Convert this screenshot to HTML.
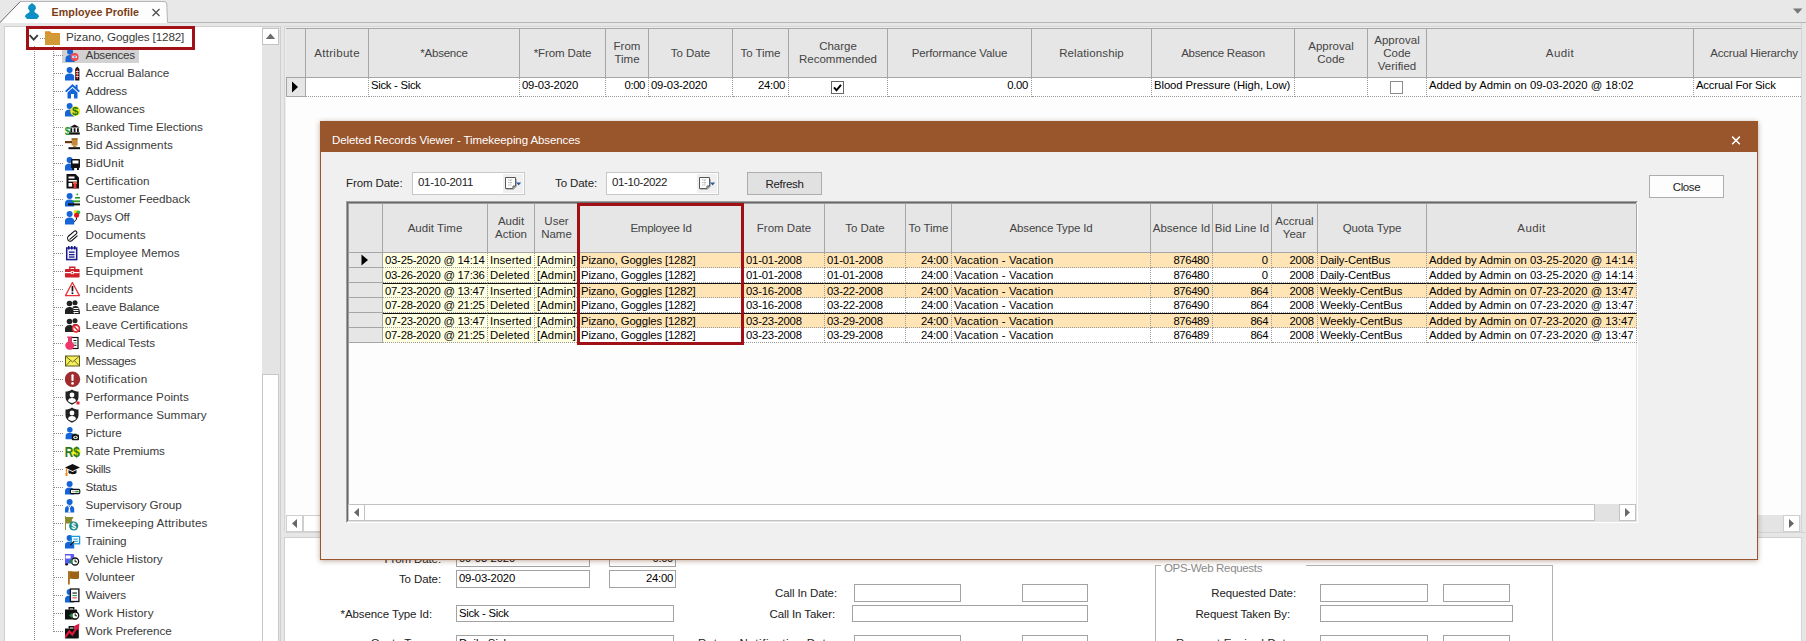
<!DOCTYPE html><html><head><meta charset="utf-8"><title>Employee Profile</title><style>
*{box-sizing:border-box;margin:0;padding:0}
html,body{width:1806px;height:641px;overflow:hidden}
body{position:relative;background:#e6e6e6;font-family:"Liberation Sans",sans-serif;font-size:11.5px;color:#3a3a3a;line-height:1}
.abs{position:absolute}
.t{position:absolute;white-space:nowrap;line-height:14px;height:14px}
.tree-item{position:absolute;left:62px;height:16px;white-space:nowrap}
.tree-item svg{position:absolute;left:3px;top:0;width:16px;height:16px}
.tree-item span{position:absolute;left:23.6px;top:1px;line-height:14px;font-size:11.7px;color:#3a3a3a}
.hd{position:absolute;background:#e6e6e6;border-right:1px solid #a6a6a6;border-bottom:1px solid #a6a6a6;display:flex;align-items:center;justify-content:center;text-align:center;color:#444;font-size:11.5px;line-height:13px;letter-spacing:0}
.cell{position:absolute;white-space:nowrap;overflow:hidden;font-size:11.3px;line-height:14px;color:#000;border-right:1px dotted #9a9a9a;border-bottom:1px dotted #9a9a9a;padding:0 3px;letter-spacing:.1px}
.r{text-align:right}
.inp{position:absolute;background:#fff;border:1px solid #a2a2a2;font-size:11.3px;line-height:14px;color:#000;padding:0 2px;white-space:nowrap;overflow:hidden}
.lbl{position:absolute;white-space:nowrap;font-size:11.5px;line-height:14px;color:#222;text-align:right;letter-spacing:-.1px}
</style></head><body>
<div class="abs" style="left:0;top:0;width:1806px;height:22px;background:#e8e8e8"></div>
<div class="abs" style="left:0;top:22px;width:1806px;height:1px;background:#b6b6b6"></div>
<div class="abs" style="left:0;top:23px;width:1806px;height:618px;background:#e6e6e6"></div>
<svg class="abs" style="left:0;top:0" width="175" height="24" viewBox="0 0 175 24"><path d="M-0.5 23 L20.3 1.5 H164 Q166.6 1.5 166.8 4 L167.5 23 Z" fill="#fdfdfd"/><path d="M20.3 1.5 H164 Q166.6 1.5 166.8 4 L167.5 22.5" fill="none" stroke="#b4b4b4" stroke-width="1"/><path d="M-0.5 23 L20.3 1.5" stroke="#6a6a6a" stroke-width="1" fill="none"/><path d="M32 3 L35.4 5.8 L36 8.4 L34.6 10.6 L34.4 12 L38 14.4 L39.2 16.3 L37 19 H27 L24.8 16.3 L26 14.4 L29.6 12 L29.4 10.6 L28 8.4 L28.6 5.8 Z" fill="#0c8fc4"/><path d="M152.5 9 L159.5 16 M159.5 9 L152.5 16" stroke="#4a4a4a" stroke-width="1.15" fill="none"/></svg>
<div class="t" style="left:51.6px;top:5px;font-weight:bold;font-size:10.7px;color:#7a3c12;letter-spacing:.05px">Employee Profile</div>
<div class="abs" style="left:4px;top:26px;width:277px;height:620px;background:#fff;border:1px solid #cfcfcf"></div>
<div class="abs" style="left:262px;top:27px;width:18px;height:614px;background:#e4e4e4"></div>
<div class="abs" style="left:262px;top:28px;width:17px;height:17px;background:#fff;border:1px solid #c2c2c2"></div>
<svg class="abs" style="left:262px;top:28px" width="17" height="17"><path d="M3.8 11 L8.5 5.6 L13.2 11 Z" fill="#6d6d6d"/></svg>
<div class="abs" style="left:262px;top:374px;width:17px;height:270px;background:#fff;border:1px solid #c8c8c8"></div>
<div class="abs" style="left:34px;top:46px;width:0;height:600px;border-left:1px dotted #8a8a8a"></div>
<div class="abs" style="left:53px;top:46px;width:0;height:586px;border-left:1px dotted #8a8a8a"></div>
<svg class="abs" style="left:28px;top:32px" width="12" height="12"><path d="M1.6 3.2 L5.7 7.6 L9.8 3.2" stroke="#3a3a3a" stroke-width="1.9" fill="none"/></svg>
<div class="abs" style="left:40px;top:38px;width:5px;height:0;border-top:1px dotted #8a8a8a"></div>
<svg class="abs" style="left:45px;top:30px" width="16" height="16"><path d="M0 1.2 H5 L6.4 3 H15 V15 H0 Z" fill="#e48a26"/><rect x="0" y="3.6" width="15" height="11.4" fill="#d29a36"/></svg>
<div class="t" style="left:66px;top:30px;font-size:11.7px;color:#3a3a3a;letter-spacing:-.15px">Pizano, Goggles [1282]</div>
<div class="abs" style="left:62px;top:47px;width:77px;height:16px;background:#d2d2d2"></div>
<div class="abs" style="left:54px;top:55px;width:9px;height:0;border-top:1px dotted #8a8a8a"></div>
<div class="tree-item" style="top:47px"><svg viewBox="0 0 16 16"><g transform="translate(0.5,-0.3) scale(1.0)" fill="#1565d8"><circle cx="4.6" cy="5.1" r="3"/><path d="M0 15.4 V12 C0 9.6 1.8 8.4 4.6 8.4 C7.4 8.4 9.2 9.6 9.2 12 V15.4 Z"/></g><circle cx="9.6" cy="9.9" r="4" fill="#f0454f"/><rect x="7.4" y="8.7" width="4.4" height="2.4" fill="#fff"/><rect x="8.6" y="9.3" width="2.2" height="1.2" fill="#1565d8"/></svg><span style="letter-spacing:-0.26px">Absences</span></div>
<div class="abs" style="left:54px;top:73px;width:9px;height:0;border-top:1px dotted #8a8a8a"></div>
<div class="tree-item" style="top:65px"><svg viewBox="0 0 16 16"><g transform="translate(0,0) scale(1.0)" fill="#1565d8"><circle cx="4.6" cy="5.1" r="3"/><path d="M0 15.4 V12 C0 9.6 1.8 8.4 4.6 8.4 C7.4 8.4 9.2 9.6 9.2 12 V15.4 Z"/></g><path d="M10.2 15.4 V4 L12.2 1.5 L14.4 4 V15.4 Z" fill="#111"/><rect x="11.6" y="4.5" width="1.4" height="9.5" fill="#e33"/><rect x="10.8" y="6" width="3" height="0.8" fill="#fff"/><rect x="10.8" y="8.5" width="3" height="0.8" fill="#fff"/><rect x="10.8" y="11" width="3" height="0.8" fill="#fff"/></svg><span style="letter-spacing:-0.06px">Accrual Balance</span></div>
<div class="abs" style="left:54px;top:91px;width:9px;height:0;border-top:1px dotted #8a8a8a"></div>
<div class="tree-item" style="top:83px"><svg viewBox="0 0 16 16"><path d="M7.5 1 L0 8 L1.4 9.3 L7.5 3.8 L13.6 9.3 L15 8 L12.6 5.7 V1.8 H10.6 V3.8 Z" fill="#1565d8"/><path d="M2.5 9.5 L7.5 5 L12.5 9.5 V15.4 H9 V11 H6 V15.4 H2.5 Z" fill="#1565d8"/></svg><span style="letter-spacing:-0.25px">Address</span></div>
<div class="abs" style="left:54px;top:109px;width:9px;height:0;border-top:1px dotted #8a8a8a"></div>
<div class="tree-item" style="top:101px"><svg viewBox="0 0 16 16"><g transform="translate(0,0) scale(1.0)" fill="#1565d8"><circle cx="4.6" cy="5.1" r="3"/><path d="M0 15.4 V12 C0 9.6 1.8 8.4 4.6 8.4 C7.4 8.4 9.2 9.6 9.2 12 V15.4 Z"/></g><circle cx="10.2" cy="10.2" r="4.9" fill="#f3e91a"/><text x="10.2" y="14.4" font-size="11.5" font-weight="bold" text-anchor="middle" fill="#1a7a1a" font-family='&quot;Liberation Sans&quot;, sans-serif'>$</text></svg><span style="letter-spacing:0.01px">Allowances</span></div>
<div class="abs" style="left:54px;top:127px;width:9px;height:0;border-top:1px dotted #8a8a8a"></div>
<div class="tree-item" style="top:119px"><svg viewBox="0 0 16 16"><text x="2.4" y="15.6" font-size="10" font-weight="bold" text-anchor="middle" fill="#1a9a1a" font-family='&quot;Liberation Sans&quot;, sans-serif'>$</text><path d="M9.6 5.6 L14.8 8.6 H4.4 Z" fill="#111"/><rect x="5.4" y="9.2" width="1.8" height="4" fill="#111"/><rect x="8.7" y="9.2" width="1.8" height="4" fill="#111"/><rect x="12" y="9.2" width="1.8" height="4" fill="#111"/><rect x="4.4" y="13.4" width="10.4" height="2.2" fill="#111"/></svg><span style="letter-spacing:-0.08px">Banked Time Elections</span></div>
<div class="abs" style="left:54px;top:145px;width:9px;height:0;border-top:1px dotted #8a8a8a"></div>
<div class="tree-item" style="top:137px"><svg viewBox="0 0 16 16"><rect x="6.6" y="1.4" width="6" height="7" fill="#c58a3a"/><rect x="6.6" y="1.4" width="6" height="1.2" fill="#8b5a1a"/><rect x="-1" y="4" width="8" height="2.2" fill="#6a3a0e"/><rect x="8" y="8.4" width="3.4" height="1.8" fill="#c58a3a"/><rect x="3.5" y="10.2" width="11.5" height="2" fill="#111"/></svg><span style="letter-spacing:0.06px">Bid Assignments</span></div>
<div class="abs" style="left:54px;top:163px;width:9px;height:0;border-top:1px dotted #8a8a8a"></div>
<div class="tree-item" style="top:155px"><svg viewBox="0 0 16 16"><g transform="translate(0,0) scale(1.0)" fill="#1565d8"><circle cx="4.6" cy="5.1" r="3"/><path d="M0 15.4 V12 C0 9.6 1.8 8.4 4.6 8.4 C7.4 8.4 9.2 9.6 9.2 12 V15.4 Z"/></g><g transform="translate(-1,0)"><rect x="7" y="4" width="9" height="9" rx="1" fill="#111"/><rect x="8.5" y="5.5" width="6" height="3" fill="#fff"/><rect x="8" y="13" width="2" height="2" fill="#111"/><rect x="13" y="13" width="2" height="2" fill="#111"/></g></svg><span style="letter-spacing:0.10px">BidUnit</span></div>
<div class="abs" style="left:54px;top:181px;width:9px;height:0;border-top:1px dotted #8a8a8a"></div>
<div class="tree-item" style="top:173px"><svg viewBox="0 0 16 16"><path d="M1.5 1 H10.5 L14 4.5 V15.4 H1.5 Z" fill="#111"/><rect x="3.5" y="3.5" width="6" height="2" fill="#fff"/><rect x="3.5" y="7" width="8.4" height="1.6" fill="#fff"/><rect x="3.5" y="10" width="3.6" height="3.6" fill="#fff"/><rect x="8" y="9" width="4" height="2" fill="#f05a3a"/><rect x="8.6" y="11" width="2.8" height="4.4" fill="#e33"/></svg><span style="letter-spacing:0.19px">Certification</span></div>
<div class="abs" style="left:54px;top:199px;width:9px;height:0;border-top:1px dotted #8a8a8a"></div>
<div class="tree-item" style="top:191px"><svg viewBox="0 0 16 16"><g transform="translate(0,0) scale(1.0)" fill="#1565d8"><circle cx="4.6" cy="5.1" r="3"/><path d="M0 15.4 V12 C0 9.6 1.8 8.4 4.6 8.4 C7.4 8.4 9.2 9.6 9.2 12 V15.4 Z"/></g><rect x="11.5" y="2.6" width="1.6" height="1.6" fill="#2a9a2a"/><rect x="10" y="6" width="5" height="1.6" fill="#2a9a2a"/><rect x="7" y="9.4" width="8" height="1.8" fill="#2a9a2a"/><rect x="3" y="12.4" width="12" height="2" fill="#111"/></svg><span style="letter-spacing:-0.05px">Customer Feedback</span></div>
<div class="abs" style="left:54px;top:217px;width:9px;height:0;border-top:1px dotted #8a8a8a"></div>
<div class="tree-item" style="top:209px"><svg viewBox="0 0 16 16"><g transform="translate(0,0) scale(1.0)" fill="#1565d8"><circle cx="4.6" cy="5.1" r="3"/><path d="M0 15.4 V12 C0 9.6 1.8 8.4 4.6 8.4 C7.4 8.4 9.2 9.6 9.2 12 V15.4 Z"/></g><circle cx="11" cy="3.4" r="2.4" fill="#f3e21a"/><circle cx="13.3" cy="3.6" r="2" fill="#2aba4a"/><circle cx="11.6" cy="6.2" r="2.5" fill="#e8151f"/><path d="M11.6 8.6 C11.6 11 10.5 12 9 12.6" stroke="#111" stroke-width="1" fill="none"/></svg><span style="letter-spacing:-0.16px">Days Off</span></div>
<div class="abs" style="left:54px;top:235px;width:9px;height:0;border-top:1px dotted #8a8a8a"></div>
<div class="tree-item" style="top:227px"><svg viewBox="0 0 16 16"><path d="M4 12.2 L10.8 6.4 A1.7 1.7 0 0 0 8.6 3.8 L2.6 9 A2.8 2.8 0 0 0 6.2 13.2 L12 8.2" transform="translate(0.5,0.5)" stroke="#111" stroke-width="1.1" fill="none"/></svg><span style="letter-spacing:0.11px">Documents</span></div>
<div class="abs" style="left:54px;top:253px;width:9px;height:0;border-top:1px dotted #8a8a8a"></div>
<div class="tree-item" style="top:245px"><svg viewBox="0 0 16 16"><rect x="1.7" y="3" width="10" height="11.6" fill="#eef" stroke="#1a1a8a" stroke-width="1.5"/><rect x="3" y="1" width="1.5" height="3.5" fill="#1a1a8a"/><rect x="6" y="1" width="1.5" height="3.5" fill="#1a1a8a"/><rect x="9" y="1" width="1.5" height="3.5" fill="#1a1a8a"/><rect x="4" y="6.5" width="5.5" height="1.3" fill="#1a1a8a"/><rect x="4" y="9" width="5.5" height="1.3" fill="#1a1a8a"/><rect x="4" y="11.4" width="5.5" height="1.3" fill="#1a1a8a"/></svg><span style="letter-spacing:0.04px">Employee Memos</span></div>
<div class="abs" style="left:54px;top:271px;width:9px;height:0;border-top:1px dotted #8a8a8a"></div>
<div class="tree-item" style="top:263px"><svg viewBox="0 0 16 16"><path d="M4.8 6 V4.2 H9.8 V6" stroke="#d0202a" stroke-width="1.4" fill="none"/><rect x="0" y="6" width="14.6" height="8.6" rx="0.8" fill="#d0202a"/><rect x="0" y="9" width="14.6" height="1.2" fill="#fff"/><rect x="5.8" y="8" width="3" height="3.2" fill="#fff"/><rect x="6.6" y="8.8" width="1.4" height="1.6" fill="#d0202a"/></svg><span style="letter-spacing:0.16px">Equipment</span></div>
<div class="abs" style="left:54px;top:289px;width:9px;height:0;border-top:1px dotted #8a8a8a"></div>
<div class="tree-item" style="top:281px"><svg viewBox="0 0 16 16"><path d="M7.4 1.5 L14.4 14.6 H0.4 Z" fill="#fff" stroke="#e8303a" stroke-width="1.3" stroke-linejoin="round"/><rect x="6.6" y="5" width="1.7" height="5.4" fill="#111"/><rect x="6.6" y="11.4" width="1.7" height="1.7" fill="#111"/></svg><span style="letter-spacing:0.06px">Incidents</span></div>
<div class="abs" style="left:54px;top:307px;width:9px;height:0;border-top:1px dotted #8a8a8a"></div>
<div class="tree-item" style="top:299px"><svg viewBox="0 0 16 16"><g transform="translate(-1,0)"><g fill="#222"><circle cx="5.5" cy="4.5" r="2.8"/><path d="M0 15 C0.5 11 2 8 5.5 8 C9 8 10 10 10.5 15 Z"/><circle cx="11" cy="3.8" r="2.5"/><path d="M8.5 8 C10 6.6 13 6.6 14.2 8 C15.5 9.5 16 12 16 15 H11 Z"/></g><g fill="#fff"><rect x="9.5" y="9" width="5" height="1"/><rect x="9.5" y="11" width="5" height="1"/><rect x="9.5" y="13" width="5" height="1"/></g></g></svg><span style="letter-spacing:-0.29px">Leave Balance</span></div>
<div class="abs" style="left:54px;top:325px;width:9px;height:0;border-top:1px dotted #8a8a8a"></div>
<div class="tree-item" style="top:317px"><svg viewBox="0 0 16 16"><g transform="translate(-1,0)"><g fill="#222"><circle cx="5.5" cy="4.5" r="2.8"/><path d="M0 15 C0.5 11 2 8 5.5 8 C9 8 10 10 10.5 15 Z"/><circle cx="11" cy="3.8" r="2.5"/><path d="M8.5 8 C10 6.6 13 6.6 14.2 8 C15.5 9.5 16 12 16 15 H11 Z"/></g><circle cx="12" cy="11.5" r="3.4" fill="#fff" stroke="#e8252f" stroke-width="1.6"/><path d="M9.8 9.3 L14.2 13.7" stroke="#e8252f" stroke-width="1.5"/></g></svg><span style="letter-spacing:-0.02px">Leave Certifications</span></div>
<div class="abs" style="left:54px;top:343px;width:9px;height:0;border-top:1px dotted #8a8a8a"></div>
<div class="tree-item" style="top:335px"><svg viewBox="0 0 16 16"><rect x="6" y="2.5" width="7" height="11" fill="#fff" stroke="#111" stroke-width="1.2"/><rect x="8.5" y="5" width="3" height="1" fill="#111"/><rect x="8.5" y="7.4" width="3" height="1" fill="#2a9a5a"/><rect x="8.5" y="9.8" width="3" height="1" fill="#111"/><path d="M2 1.4 H7.4 V2.8 H6.4 V6.4 A4.4 4.4 0 1 1 3 6.4 V2.8 H2 Z" fill="#f0356a"/></svg><span style="letter-spacing:-0.10px">Medical Tests</span></div>
<div class="abs" style="left:54px;top:361px;width:9px;height:0;border-top:1px dotted #8a8a8a"></div>
<div class="tree-item" style="top:353px"><svg viewBox="0 0 16 16"><rect x="0.5" y="3" width="14" height="10" fill="#f5ef5a" stroke="#5a5a1a" stroke-width="1"/><path d="M0.7 3.3 L7.5 9 L14.3 3.3 M0.7 12.8 L5.8 7.4 M14.3 12.8 L9.2 7.4" stroke="#5a5a1a" stroke-width="0.9" fill="none"/></svg><span style="letter-spacing:-0.39px">Messages</span></div>
<div class="abs" style="left:54px;top:379px;width:9px;height:0;border-top:1px dotted #8a8a8a"></div>
<div class="tree-item" style="top:371px"><svg viewBox="0 0 16 16"><circle cx="7.5" cy="8.3" r="7.7" fill="#a02c30"/><rect x="6.4" y="3.2" width="2.2" height="6.8" rx="1" fill="#fff"/><circle cx="7.5" cy="12.4" r="1.3" fill="#fff"/></svg><span style="letter-spacing:0.35px">Notification</span></div>
<div class="abs" style="left:54px;top:397px;width:9px;height:0;border-top:1px dotted #8a8a8a"></div>
<div class="tree-item" style="top:389px"><svg viewBox="0 0 16 16"><g transform="translate(-1,0)"><path d="M8 0.5 C10 2 12.5 2.6 14.5 2.6 V8 C14.5 11.5 12 14 8 15.7 C4 14 1.5 11.5 1.5 8 V2.6 C3.5 2.6 6 2 8 0.5 Z" fill="#222"/><circle cx="8" cy="6" r="2.4" fill="#fff"/><path d="M4 12 C4.2 10 5.5 9 8 9 C10.5 9 11.8 10 12 12 C11 13 9.5 13.6 8 14 C6.5 13.6 5 13 4 12 Z" fill="#fff"/><rect x="12.5" y="12.5" width="3" height="3" fill="#e8252f"/></g></svg><span style="letter-spacing:0.03px">Performance Points</span></div>
<div class="abs" style="left:54px;top:415px;width:9px;height:0;border-top:1px dotted #8a8a8a"></div>
<div class="tree-item" style="top:407px"><svg viewBox="0 0 16 16"><g transform="translate(-1,0)"><path d="M8 0.5 C10 2 12.5 2.6 14.5 2.6 V8 C14.5 11.5 12 14 8 15.7 C4 14 1.5 11.5 1.5 8 V2.6 C3.5 2.6 6 2 8 0.5 Z" fill="#222"/><circle cx="8" cy="6" r="2.4" fill="#fff"/><path d="M4 12 C4.2 10 5.5 9 8 9 C10.5 9 11.8 10 12 12 C11 13 9.5 13.6 8 14 C6.5 13.6 5 13 4 12 Z" fill="#fff"/></g></svg><span style="letter-spacing:0.04px">Performance Summary</span></div>
<div class="abs" style="left:54px;top:433px;width:9px;height:0;border-top:1px dotted #8a8a8a"></div>
<div class="tree-item" style="top:425px"><svg viewBox="0 0 16 16"><g transform="translate(0.6,0) scale(0.92)" fill="#1565d8"><circle cx="4.6" cy="5.1" r="3"/><path d="M0 15.4 V12 C0 9.6 1.8 8.4 4.6 8.4 C7.4 8.4 9.2 9.6 9.2 12 V15.4 Z"/></g><rect x="6.8" y="9.6" width="7.2" height="5.6" rx="1" fill="#111"/><rect x="8.6" y="8.7" width="3" height="1.4" fill="#111"/><ellipse cx="10.5" cy="12.4" rx="2.2" ry="1.6" fill="#fff"/><ellipse cx="10.5" cy="12.4" rx="1.1" ry="0.8" fill="#111"/></svg><span style="letter-spacing:-0.03px">Picture</span></div>
<div class="abs" style="left:54px;top:451px;width:9px;height:0;border-top:1px dotted #8a8a8a"></div>
<div class="tree-item" style="top:443px"><svg viewBox="0 0 16 16"><circle cx="11" cy="9" r="4.6" fill="#f3f01a"/><text x="7.3" y="14" font-size="14" font-weight="bold" text-anchor="middle" fill="#2a7a1a" font-family='&quot;Liberation Sans&quot;, sans-serif' textLength="15" lengthAdjust="spacingAndGlyphs">R$</text></svg><span style="letter-spacing:-0.10px">Rate Premiums</span></div>
<div class="abs" style="left:54px;top:469px;width:9px;height:0;border-top:1px dotted #8a8a8a"></div>
<div class="tree-item" style="top:461px"><svg viewBox="0 0 16 16"><g transform="translate(-1,0)"><path d="M8.5 3 L16 6.5 L8.5 10 L1 6.5 Z" fill="#111"/><path d="M4.5 9 V12 C6 13.6 11 13.6 12.5 12 V9 L8.5 11 Z" fill="#111"/><path d="M2.5 7 V13" stroke="#f08a1a" stroke-width="1.3"/><rect x="1.5" y="12" width="2" height="3" fill="#f08a1a"/></g></svg><span style="letter-spacing:-0.38px">Skills</span></div>
<div class="abs" style="left:54px;top:487px;width:9px;height:0;border-top:1px dotted #8a8a8a"></div>
<div class="tree-item" style="top:479px"><svg viewBox="0 0 16 16"><g transform="translate(0,0) scale(1.0)" fill="#1565d8"><circle cx="4.6" cy="5.1" r="3"/><path d="M0 15.4 V12 C0 9.6 1.8 8.4 4.6 8.4 C7.4 8.4 9.2 9.6 9.2 12 V15.4 Z"/></g><rect x="5.4" y="10.4" width="9.4" height="4.2" rx="1" fill="#fff" stroke="#111" stroke-width="1.1"/><rect x="7" y="11.8" width="4" height="1.5" fill="#bbb"/><rect x="10.6" y="11.8" width="3" height="1.5" fill="#2a9a2a"/></svg><span style="letter-spacing:-0.33px">Status</span></div>
<div class="abs" style="left:54px;top:505px;width:9px;height:0;border-top:1px dotted #8a8a8a"></div>
<div class="tree-item" style="top:497px"><svg viewBox="0 0 16 16"><g transform="translate(0,0) scale(1.0)" fill="#1565d8"><circle cx="4.6" cy="5.1" r="3"/><path d="M0 15.4 V12 C0 9.6 1.8 8.4 4.6 8.4 C7.4 8.4 9.2 9.6 9.2 12 V15.4 Z"/></g><path d="M4.4 8.4 L5.6 15.4 H3.2 Z" fill="#fff"/><path d="M2.6 8.6 L4.4 11 L6.2 8.6" stroke="#fff" stroke-width="0.9" fill="none"/></svg><span style="letter-spacing:-0.08px">Supervisory Group</span></div>
<div class="abs" style="left:54px;top:523px;width:9px;height:0;border-top:1px dotted #8a8a8a"></div>
<div class="tree-item" style="top:515px"><svg viewBox="0 0 16 16"><g transform="translate(-2.3,0)"><rect x="1.5" y="1" width="1.6" height="14" fill="#7a7a1a"/><path d="M3 2 H11 L9 5 L11 8.5 H3 Z" fill="#8a8a2a"/><circle cx="11" cy="11" r="4.6" fill="#1a8a8a"/><text x="11" y="14.2" font-size="8.5" font-weight="bold" text-anchor="middle" fill="#fff" font-family='"Liberation Sans", sans-serif'>$</text></g></svg><span style="letter-spacing:0.16px">Timekeeping Attributes</span></div>
<div class="abs" style="left:54px;top:541px;width:9px;height:0;border-top:1px dotted #8a8a8a"></div>
<div class="tree-item" style="top:533px"><svg viewBox="0 0 16 16"><g transform="translate(0,0) scale(1.0)" fill="#1565d8"><circle cx="4.6" cy="5.1" r="3"/><path d="M0 15.4 V12 C0 9.6 1.8 8.4 4.6 8.4 C7.4 8.4 9.2 9.6 9.2 12 V15.4 Z"/></g><rect x="6.4" y="3.4" width="8.2" height="7.4" fill="#fff" stroke="#1a9ad8" stroke-width="1.3"/><rect x="8.4" y="5.6" width="4.4" height="1" fill="#1a9ad8"/><rect x="8.4" y="7.8" width="4.4" height="1" fill="#1a9ad8"/><path d="M5.4 12 L9 8.6" stroke="#111" stroke-width="1.4"/></svg><span style="letter-spacing:-0.12px">Training</span></div>
<div class="abs" style="left:54px;top:559px;width:9px;height:0;border-top:1px dotted #8a8a8a"></div>
<div class="tree-item" style="top:551px"><svg viewBox="0 0 16 16"><g transform="translate(-1.4,0)"><rect x="0.5" y="3" width="10" height="8.5" rx="1" fill="#5a5af0"/><rect x="2" y="4.5" width="5" height="3" fill="#fff"/><circle cx="3" cy="13" r="1.6" fill="#111"/><rect x="0.5" y="11" width="8" height="1.5" fill="#5a5af0"/><circle cx="11.5" cy="10.5" r="3.5" fill="#fff" stroke="#111" stroke-width="1.3"/><path d="M11.5 8.5 V10.8 H13.3" stroke="#111" stroke-width="1" fill="none"/><path d="M5.2 10.5 L8.7 7.7 V13.3 Z" fill="#1a8a3a"/></g></svg><span style="letter-spacing:-0.02px">Vehicle History</span></div>
<div class="abs" style="left:54px;top:577px;width:9px;height:0;border-top:1px dotted #8a8a8a"></div>
<div class="tree-item" style="top:569px"><svg viewBox="0 0 16 16"><g transform="translate(-1,0)"><rect x="4" y="2" width="1.8" height="13.5" fill="#a8701a"/><path d="M5.5 2.5 C8 1.5 11 3.5 15 2 V9.5 C11 11 8 9 5.5 10 Z" fill="#9a6414"/></g></svg><span style="letter-spacing:-0.02px">Volunteer</span></div>
<div class="abs" style="left:54px;top:595px;width:9px;height:0;border-top:1px dotted #8a8a8a"></div>
<div class="tree-item" style="top:587px"><svg viewBox="0 0 16 16"><g transform="translate(0,0) scale(1.0)" fill="#1565d8"><circle cx="4.6" cy="5.1" r="3"/><path d="M0 15.4 V12 C0 9.6 1.8 8.4 4.6 8.4 C7.4 8.4 9.2 9.6 9.2 12 V15.4 Z"/></g><g transform="translate(-1.1,0)"><rect x="6.5" y="2" width="8.5" height="12.5" fill="#fff" stroke="#111" stroke-width="1.3"/><rect x="8.5" y="5.5" width="4.5" height="1.1" fill="#111"/><rect x="8.5" y="8" width="4.5" height="1.1" fill="#2a9a5a"/><rect x="8.5" y="10.3" width="4.5" height="1.1" fill="#e8454f"/></g></svg><span style="letter-spacing:-0.23px">Waivers</span></div>
<div class="abs" style="left:54px;top:613px;width:9px;height:0;border-top:1px dotted #8a8a8a"></div>
<div class="tree-item" style="top:605px"><svg viewBox="0 0 16 16"><g transform="translate(-1.3,0)"><path d="M5.5 4.5 V2.8 H10 V4.5" stroke="#111" stroke-width="1.4" fill="none"/><rect x="0.5" y="4.5" width="13" height="10" rx="1.3" fill="#111"/><circle cx="11.5" cy="10.5" r="3.5" fill="#fff" stroke="#111" stroke-width="1.3"/><path d="M11.5 8.5 V10.8 H13.3" stroke="#111" stroke-width="1" fill="none"/><path d="M5.2 10.5 L8.7 7.7 V13.3 Z" fill="#1a8a3a"/></g></svg><span style="letter-spacing:0.11px">Work History</span></div>
<div class="abs" style="left:54px;top:631px;width:9px;height:0;border-top:1px dotted #8a8a8a"></div>
<div class="tree-item" style="top:623px"><svg viewBox="0 0 16 16"><g transform="translate(-1.2,0)"><path d="M5.5 5.5 V3.8 H10 V5.5" stroke="#111" stroke-width="1.4" fill="none"/><rect x="0.5" y="5.5" width="14.5" height="10" rx="1.3" fill="#111"/><path d="M1 14.5 L5.5 8.5 L8.5 11.5 L12.5 5.5" stroke="#e0143c" stroke-width="2.2" fill="none"/><path d="M9.5 3.5 L15.5 0.5 L15 7.5 Z" fill="#e0143c"/></g></svg><span style="letter-spacing:-0.10px">Work Preference</span></div>
<div class="abs" style="left:26px;top:26px;width:169px;height:24px;border:3px solid #a10f17"></div>
<div class="abs" style="left:284px;top:26px;width:1522px;height:506px;background:#fdfdfd;border-left:1px solid #d6d6d6;border-top:1px solid #d6d6d6;box-shadow:inset 1px 1px 0 #ececec"></div>
<div class="abs" style="left:286px;top:28px;width:1520px;height:1px;background:#a6a6a6"></div>
<div class="abs" style="left:286px;top:77px;width:1px;height:20px;background:#a6a6a6"></div>
<div class="hd" style="left:286px;top:29px;width:20px;height:49px;"></div>
<div class="hd" style="left:306px;top:29px;width:63px;height:49px;letter-spacing:0.32px;">Attribute</div>
<div class="hd" style="left:369px;top:29px;width:151px;height:49px;letter-spacing:-0.22px;">*Absence</div>
<div class="hd" style="left:520px;top:29px;width:86px;height:49px;letter-spacing:-0.11px;">*From Date</div>
<div class="hd" style="left:606px;top:29px;width:43px;height:49px;">From<br>Time</div>
<div class="hd" style="left:649px;top:29px;width:84px;height:49px;letter-spacing:-0.02px;">To Date</div>
<div class="hd" style="left:733px;top:29px;width:56px;height:49px;letter-spacing:-0.05px;">To Time</div>
<div class="hd" style="left:789px;top:29px;width:99px;height:49px;">Charge<br>Recommended</div>
<div class="hd" style="left:888px;top:29px;width:144px;height:49px;letter-spacing:-0.11px;">Performance Value</div>
<div class="hd" style="left:1032px;top:29px;width:120px;height:49px;letter-spacing:0.12px;">Relationship</div>
<div class="hd" style="left:1152px;top:29px;width:143px;height:49px;letter-spacing:-0.28px;">Absence Reason</div>
<div class="hd" style="left:1295px;top:29px;width:73px;height:49px;">Approval<br>Code</div>
<div class="hd" style="left:1368px;top:29px;width:59px;height:49px;">Approval<br>Code<br>Verified</div>
<div class="hd" style="left:1427px;top:29px;width:267px;height:49px;letter-spacing:0.42px;">Audit</div>
<div class="hd" style="left:1694px;top:29px;width:121px;height:49px;letter-spacing:-0.18px;">Accrual Hierarchy</div>
<div class="abs" style="left:286px;top:78px;width:20px;height:19px;background:#e6e6e6;border-right:1px solid #a6a6a6;border-bottom:1px solid #a6a6a6;border-left:1px solid #a6a6a6"></div>
<svg class="abs" style="left:286px;top:78px" width="19" height="19"><path d="M6 3.5 L12 9 L6 14.5 Z" fill="#000"/></svg>
<div class="cell" style="left:306px;top:78px;width:63px;height:19px;background:#fff;padding:0 3px 0 2px;"></div>
<div class="cell" style="left:369px;top:78px;width:151px;height:19px;background:#fff;padding:0 3px 0 2px;letter-spacing:-0.28px;">Sick - Sick</div>
<div class="cell" style="left:520px;top:78px;width:86px;height:19px;background:#fff;padding:0 3px 0 2px;letter-spacing:-0.18px;">09-03-2020</div>
<div class="cell r" style="left:606px;top:78px;width:43px;height:19px;background:#fff;padding:0 3px 0 2px;letter-spacing:-0.40px;">0:00</div>
<div class="cell" style="left:649px;top:78px;width:84px;height:19px;background:#fff;padding:0 3px 0 2px;letter-spacing:-0.18px;">09-03-2020</div>
<div class="cell r" style="left:733px;top:78px;width:56px;height:19px;background:#fff;padding:0 3px 0 2px;letter-spacing:-0.23px;">24:00</div>
<div class="cell" style="left:789px;top:78px;width:99px;height:19px;background:#fff;padding:0 3px 0 2px;"></div>
<div class="cell r" style="left:888px;top:78px;width:144px;height:19px;background:#fff;padding:0 3px 0 2px;letter-spacing:-0.30px;">0.00</div>
<div class="cell" style="left:1032px;top:78px;width:120px;height:19px;background:#fff;padding:0 3px 0 2px;"></div>
<div class="cell" style="left:1152px;top:78px;width:143px;height:19px;background:#fff;padding:0 3px 0 2px;letter-spacing:-0.07px;">Blood Pressure (High, Low)</div>
<div class="cell" style="left:1295px;top:78px;width:73px;height:19px;background:#fff;padding:0 3px 0 2px;"></div>
<div class="cell" style="left:1368px;top:78px;width:59px;height:19px;background:#fff;padding:0 3px 0 2px;"></div>
<div class="cell" style="left:1427px;top:78px;width:267px;height:19px;background:#fff;padding:0 3px 0 2px;letter-spacing:-0.01px;">Added by Admin on 09-03-2020 @ 18:02</div>
<div class="cell" style="left:1694px;top:78px;width:121px;height:19px;background:#fff;padding:0 3px 0 2px;letter-spacing:-0.16px;">Accrual For Sick</div>
<div class="abs" style="left:831px;top:81px;width:13px;height:13px;background:#fff;border:1px solid #666"></div>
<svg class="abs" style="left:831px;top:81px" width="13" height="13"><path d="M3 6.3 L5.5 9.3 L10 3.8" stroke="#000" stroke-width="2" fill="none"/></svg>
<div class="abs" style="left:1390px;top:81px;width:13px;height:13px;background:#fff;border:1px solid #8c8c8c"></div>
<div class="abs" style="left:286px;top:515px;width:1520px;height:17px;background:#e4e4e4"></div>
<div class="abs" style="left:286px;top:515px;width:17px;height:17px;background:#fff;border:1px solid #cfcfcf"></div>
<svg class="abs" style="left:286px;top:515px" width="17" height="17"><path d="M11 4 L6 8.5 L11 13 Z" fill="#666"/></svg>
<div class="abs" style="left:303px;top:515px;width:1400px;height:17px;background:#fff;border:1px solid #cfcfcf"></div>
<div class="abs" style="left:1783px;top:515px;width:17px;height:17px;background:#fff;border:1px solid #cfcfcf"></div>
<svg class="abs" style="left:1783px;top:515px" width="17" height="17"><path d="M6 4 L11 8.5 L6 13 Z" fill="#666"/></svg>
<div class="abs" style="left:284px;top:537px;width:1522px;height:110px;background:#fff;border-left:1px solid #d0d0d0;border-top:1px solid #d0d0d0"></div>
<div class="lbl" style="left:241px;top:552px;width:200px;">From Date:</div>
<div class="inp" style="left:456px;top:550px;width:134px;height:17px;letter-spacing:-0.18px;">09-03-2020</div>
<div class="inp" style="left:609px;top:550px;width:67px;height:17px;text-align:right;letter-spacing:-0.40px;">0:00</div>
<div class="lbl" style="left:241px;top:572px;width:200px;">To Date:</div>
<div class="inp" style="left:456px;top:570px;width:134px;height:18px;letter-spacing:-0.18px;">09-03-2020</div>
<div class="inp" style="left:609px;top:570px;width:67px;height:18px;text-align:right;letter-spacing:-0.23px;">24:00</div>
<div class="lbl" style="left:232px;top:607px;width:200px;">*Absence Type Id:</div>
<div class="inp" style="left:456px;top:605px;width:218px;height:17px;letter-spacing:-0.28px;">Sick - Sick</div>
<div class="lbl" style="left:232px;top:636px;width:200px;">Quota Type:</div>
<div class="inp" style="left:456px;top:635px;width:218px;height:17px;">Daily-Sick</div>
<div class="lbl" style="left:637px;top:586px;width:200px;">Call In Date:</div>
<div class="inp" style="left:854px;top:584px;width:107px;height:18px;"></div>
<div class="inp" style="left:1022px;top:584px;width:66px;height:18px;"></div>
<div class="lbl" style="left:635px;top:607px;width:200px;">Call In Taker:</div>
<div class="inp" style="left:852px;top:605px;width:236px;height:17px;"></div>
<div class="lbl" style="left:637px;top:636px;width:200px;letter-spacing:0.55px;">Return Notification Date:</div>
<div class="inp" style="left:854px;top:635px;width:107px;height:17px;"></div>
<div class="inp" style="left:1022px;top:635px;width:66px;height:17px;"></div>
<div class="abs" style="left:1155px;top:565px;width:398px;height:90px;border:1px solid #b4b4b4"></div>
<div class="t" style="left:1161px;top:561px;width:145px;background:#fff;padding:0 3px;color:#8a8a8a;font-size:11.5px;letter-spacing:-0.33px;">OPS-Web Requests</div>
<div class="lbl" style="left:1096px;top:586px;width:200px;">Requested Date:</div>
<div class="inp" style="left:1320px;top:584px;width:108px;height:18px;"></div>
<div class="inp" style="left:1443px;top:584px;width:67px;height:18px;"></div>
<div class="lbl" style="left:1090px;top:607px;width:200px;">Request Taken By:</div>
<div class="inp" style="left:1320px;top:605px;width:193px;height:17px;"></div>
<div class="lbl" style="left:1096px;top:636px;width:200px;letter-spacing:0.20px;">Request Expired Date:</div>
<div class="inp" style="left:1320px;top:635px;width:108px;height:17px;"></div>
<div class="inp" style="left:1443px;top:635px;width:67px;height:17px;"></div>
<div class="abs" style="left:1801px;top:23px;width:5px;height:618px;background:#e6e6e6;border-left:1px solid #d4d4d4"></div>
<div class="abs" style="left:286px;top:532px;width:1520px;height:5px;background:#e6e6e6;border-top:1px solid #d4d4d4"></div>
<svg class="abs" style="left:1792px;top:7px" width="12" height="8"><path d="M1 1.5 H10.4 L5.7 6.8 Z" fill="#777"/></svg>
<div class="abs" style="left:320px;top:121px;width:1438px;height:439px;background:#f0f0f0;border:1px solid #99552b;box-shadow:0 1px 5px rgba(100,50,20,.42)"></div>
<div class="abs" style="left:320px;top:121px;width:1438px;height:31px;background:#99552b"></div>
<div class="t" style="left:332px;top:133px;color:#fff;font-size:11.5px;letter-spacing:-0.09px;">Deleted Records Viewer - Timekeeping Absences</div>
<svg class="abs" style="left:1730px;top:134px" width="12" height="12"><path d="M2.2 2.6 L9.8 10.2 M9.8 2.6 L2.2 10.2" stroke="#fff" stroke-width="1.5"/></svg>
<div class="lbl" style="left:346px;top:176px;text-align:left">From Date:</div>
<div class="abs" style="left:412px;top:172px;width:113px;height:23px;background:#fff;border:1px solid #c8c8c8"></div>
<div class="t" style="left:418px;top:175px;color:#222;font-size:11.5px;letter-spacing:-0.30px;">01-10-2011</div>
<div class="lbl" style="left:555px;top:176px;text-align:left">To Date:</div>
<div class="abs" style="left:606px;top:172px;width:113px;height:23px;background:#fff;border:1px solid #c8c8c8"></div>
<div class="t" style="left:612px;top:175px;color:#222;font-size:11.5px;letter-spacing:-0.38px;">01-10-2022</div>
<div class="abs" style="left:503px;top:174px;width:20px;height:19px;background:#f0f0f0"></div>
<svg class="abs" style="left:503px;top:174px" width="20" height="19"><path d="M2.5 3.5 H12.5 V12 L10 14.5 H2.5 Z" fill="#fdfdfd" stroke="#555" stroke-width="1"/><path d="M12.5 12 H10 V14.5" fill="none" stroke="#555" stroke-width="1"/><path d="M3 15.3 H10.5 L13.4 12.5 V5" fill="none" stroke="#999" stroke-width="0.8"/><path d="M5 6 H10 M5 8.5 H10 M5 11 H8.5 M7.5 5.5 V11.5" stroke="#bbb" stroke-width="1.2" stroke-dasharray="1.5 1"/><path d="M13 8.4 H18.2 L15.6 11.4 Z" fill="#2a5a9a"/></svg>
<div class="abs" style="left:697px;top:174px;width:20px;height:19px;background:#f0f0f0"></div>
<svg class="abs" style="left:697px;top:174px" width="20" height="19"><path d="M2.5 3.5 H12.5 V12 L10 14.5 H2.5 Z" fill="#fdfdfd" stroke="#555" stroke-width="1"/><path d="M12.5 12 H10 V14.5" fill="none" stroke="#555" stroke-width="1"/><path d="M3 15.3 H10.5 L13.4 12.5 V5" fill="none" stroke="#999" stroke-width="0.8"/><path d="M5 6 H10 M5 8.5 H10 M5 11 H8.5 M7.5 5.5 V11.5" stroke="#bbb" stroke-width="1.2" stroke-dasharray="1.5 1"/><path d="M13 8.4 H18.2 L15.6 11.4 Z" fill="#2a5a9a"/></svg>
<div class="abs" style="left:747px;top:172px;width:75px;height:23px;background:#e1e1e1;border:1px solid #adadad"></div>
<div class="t" style="left:747px;top:177px;width:75px;text-align:center;color:#222;letter-spacing:-0.29px;">Refresh</div>
<div class="abs" style="left:1649px;top:175px;width:75px;height:23px;background:#fdfdfd;border:1px solid #adadad"></div>
<div class="t" style="left:1649px;top:180px;width:75px;text-align:center;color:#222;letter-spacing:-0.42px;">Close</div>
<div class="abs" style="left:346px;top:201px;width:1292px;height:322px;background:#fdfdfd;border:1px solid #a0a0a0;border-right-color:#fff;border-bottom-color:#fff"></div>
<div class="abs" style="left:347px;top:202px;width:1290px;height:320px;border:1px solid #696969;border-right-color:#e3e3e3;border-bottom-color:#e3e3e3"></div>
<div class="abs" style="left:348px;top:203px;width:1288px;height:1px;background:#9c9c9c"></div>
<div class="abs" style="left:348px;top:203px;width:1px;height:317px;background:#9c9c9c"></div>
<div class="hd" style="left:349px;top:204px;width:34px;height:49px;"></div>
<div class="hd" style="left:383px;top:204px;width:105px;height:49px;letter-spacing:0.04px;">Audit Time</div>
<div class="hd" style="left:488px;top:204px;width:47px;height:49px;">Audit<br>Action</div>
<div class="hd" style="left:535px;top:204px;width:44px;height:49px;">User<br>Name</div>
<div class="hd" style="left:579px;top:204px;width:165px;height:49px;letter-spacing:-0.26px;">Employee Id</div>
<div class="hd" style="left:744px;top:204px;width:81px;height:49px;">From Date</div>
<div class="hd" style="left:825px;top:204px;width:81px;height:49px;letter-spacing:-0.02px;">To Date</div>
<div class="hd" style="left:906px;top:204px;width:46px;height:49px;letter-spacing:-0.05px;">To Time</div>
<div class="hd" style="left:952px;top:204px;width:199px;height:49px;letter-spacing:-0.18px;">Absence Type Id</div>
<div class="hd" style="left:1151px;top:204px;width:62px;height:49px;">Absence Id</div>
<div class="hd" style="left:1213px;top:204px;width:59px;height:49px;">Bid Line Id</div>
<div class="hd" style="left:1272px;top:204px;width:46px;height:49px;">Accrual<br>Year</div>
<div class="hd" style="left:1318px;top:204px;width:109px;height:49px;letter-spacing:-0.05px;">Quota Type</div>
<div class="hd" style="left:1427px;top:204px;width:210px;height:49px;letter-spacing:0.42px;">Audit</div>
<div class="abs" style="left:349px;top:253px;width:34px;height:15px;background:#e6e6e6;border-right:1px solid #a6a6a6;border-bottom:1px solid #a6a6a6"></div>
<div class="cell" style="left:383px;top:253px;width:105px;height:15px;background:#ffffe1;padding:0 2px 0 2px;letter-spacing:-0.23px;">03-25-2020 @ 14:14</div>
<div class="cell" style="left:488px;top:253px;width:47px;height:15px;background:#ffffe1;padding:0 2px 0 2px;">Inserted</div>
<div class="cell" style="left:535px;top:253px;width:44px;height:15px;background:#ffffe1;padding:0 2px 0 2px;">[Admin]</div>
<div class="cell" style="left:579px;top:253px;width:165px;height:15px;background:#ffe4b5;padding:0 2px 0 2px;letter-spacing:-0.13px;">Pizano, Goggles [1282]</div>
<div class="cell" style="left:744px;top:253px;width:81px;height:15px;background:#ffe4b5;padding:0 2px 0 2px;letter-spacing:-0.20px;">01-01-2008</div>
<div class="cell" style="left:825px;top:253px;width:81px;height:15px;background:#ffe4b5;padding:0 2px 0 2px;letter-spacing:-0.20px;">01-01-2008</div>
<div class="cell r" style="left:906px;top:253px;width:46px;height:15px;background:#ffe4b5;padding:0 2px 0 2px;letter-spacing:-0.23px;padding-right:3px;">24:00</div>
<div class="cell" style="left:952px;top:253px;width:199px;height:15px;background:#ffe4b5;padding:0 2px 0 2px;letter-spacing:0.16px;">Vacation - Vacation</div>
<div class="cell r" style="left:1151px;top:253px;width:62px;height:15px;background:#ffe4b5;padding:0 2px 0 2px;letter-spacing:-0.35px;padding-right:3px;">876480</div>
<div class="cell r" style="left:1213px;top:253px;width:59px;height:15px;background:#ffe4b5;padding:0 2px 0 2px;letter-spacing:-0.08px;padding-right:3px;">0</div>
<div class="cell r" style="left:1272px;top:253px;width:46px;height:15px;background:#ffe4b5;padding:0 2px 0 2px;letter-spacing:-0.13px;padding-right:3px;">2008</div>
<div class="cell" style="left:1318px;top:253px;width:109px;height:15px;background:#ffe4b5;padding:0 2px 0 2px;letter-spacing:-0.16px;">Daily-CentBus</div>
<div class="cell" style="left:1427px;top:253px;width:210px;height:15px;background:#ffe4b5;padding:0 2px 0 2px;letter-spacing:-0.01px;">Added by Admin on 03-25-2020 @ 14:14</div>
<div class="abs" style="left:349px;top:268px;width:34px;height:15px;background:#e6e6e6;border-right:1px solid #a6a6a6;border-bottom:1px solid #a6a6a6"></div>
<div class="cell" style="left:383px;top:268px;width:105px;height:15px;background:#ffffe1;padding:0 2px 0 2px;letter-spacing:-0.23px;">03-26-2020 @ 17:36</div>
<div class="cell" style="left:488px;top:268px;width:47px;height:15px;background:#ffffe1;padding:0 2px 0 2px;">Deleted</div>
<div class="cell" style="left:535px;top:268px;width:44px;height:15px;background:#ffffe1;padding:0 2px 0 2px;">[Admin]</div>
<div class="cell" style="left:579px;top:268px;width:165px;height:15px;background:#fff;padding:0 2px 0 2px;letter-spacing:-0.13px;">Pizano, Goggles [1282]</div>
<div class="cell" style="left:744px;top:268px;width:81px;height:15px;background:#fff;padding:0 2px 0 2px;letter-spacing:-0.20px;">01-01-2008</div>
<div class="cell" style="left:825px;top:268px;width:81px;height:15px;background:#fff;padding:0 2px 0 2px;letter-spacing:-0.20px;">01-01-2008</div>
<div class="cell r" style="left:906px;top:268px;width:46px;height:15px;background:#fff;padding:0 2px 0 2px;letter-spacing:-0.23px;padding-right:3px;">24:00</div>
<div class="cell" style="left:952px;top:268px;width:199px;height:15px;background:#fff;padding:0 2px 0 2px;letter-spacing:0.16px;">Vacation - Vacation</div>
<div class="cell r" style="left:1151px;top:268px;width:62px;height:15px;background:#fff;padding:0 2px 0 2px;letter-spacing:-0.35px;padding-right:3px;">876480</div>
<div class="cell r" style="left:1213px;top:268px;width:59px;height:15px;background:#fff;padding:0 2px 0 2px;letter-spacing:-0.08px;padding-right:3px;">0</div>
<div class="cell r" style="left:1272px;top:268px;width:46px;height:15px;background:#fff;padding:0 2px 0 2px;letter-spacing:-0.13px;padding-right:3px;">2008</div>
<div class="cell" style="left:1318px;top:268px;width:109px;height:15px;background:#fff;padding:0 2px 0 2px;letter-spacing:-0.16px;">Daily-CentBus</div>
<div class="cell" style="left:1427px;top:268px;width:210px;height:15px;background:#fff;padding:0 2px 0 2px;letter-spacing:-0.01px;">Added by Admin on 03-25-2020 @ 14:14</div>
<div class="abs" style="left:349px;top:283px;width:34px;height:15px;background:#e6e6e6;border-right:1px solid #a6a6a6;border-bottom:1px solid #a6a6a6"></div>
<div class="cell" style="left:383px;top:283px;width:105px;height:15px;background:#ffffe1;padding:0 2px 0 2px;letter-spacing:-0.23px;border-top:1px solid #111;">07-23-2020 @ 13:47</div>
<div class="cell" style="left:488px;top:283px;width:47px;height:15px;background:#ffffe1;padding:0 2px 0 2px;border-top:1px solid #111;">Inserted</div>
<div class="cell" style="left:535px;top:283px;width:44px;height:15px;background:#ffffe1;padding:0 2px 0 2px;border-top:1px solid #111;">[Admin]</div>
<div class="cell" style="left:579px;top:283px;width:165px;height:15px;background:#ffe4b5;padding:0 2px 0 2px;letter-spacing:-0.13px;border-top:1px solid #111;">Pizano, Goggles [1282]</div>
<div class="cell" style="left:744px;top:283px;width:81px;height:15px;background:#ffe4b5;padding:0 2px 0 2px;letter-spacing:-0.20px;border-top:1px solid #111;">03-16-2008</div>
<div class="cell" style="left:825px;top:283px;width:81px;height:15px;background:#ffe4b5;padding:0 2px 0 2px;letter-spacing:-0.20px;border-top:1px solid #111;">03-22-2008</div>
<div class="cell r" style="left:906px;top:283px;width:46px;height:15px;background:#ffe4b5;padding:0 2px 0 2px;letter-spacing:-0.23px;border-top:1px solid #111;padding-right:3px;">24:00</div>
<div class="cell" style="left:952px;top:283px;width:199px;height:15px;background:#ffe4b5;padding:0 2px 0 2px;letter-spacing:0.16px;border-top:1px solid #111;">Vacation - Vacation</div>
<div class="cell r" style="left:1151px;top:283px;width:62px;height:15px;background:#ffe4b5;padding:0 2px 0 2px;letter-spacing:-0.35px;border-top:1px solid #111;padding-right:3px;">876490</div>
<div class="cell r" style="left:1213px;top:283px;width:59px;height:15px;background:#ffe4b5;padding:0 2px 0 2px;letter-spacing:-0.42px;border-top:1px solid #111;padding-right:3px;">864</div>
<div class="cell r" style="left:1272px;top:283px;width:46px;height:15px;background:#ffe4b5;padding:0 2px 0 2px;letter-spacing:-0.13px;border-top:1px solid #111;padding-right:3px;">2008</div>
<div class="cell" style="left:1318px;top:283px;width:109px;height:15px;background:#ffe4b5;padding:0 2px 0 2px;letter-spacing:-0.12px;border-top:1px solid #111;">Weekly-CentBus</div>
<div class="cell" style="left:1427px;top:283px;width:210px;height:15px;background:#ffe4b5;padding:0 2px 0 2px;letter-spacing:-0.01px;border-top:1px solid #111;">Added by Admin on 07-23-2020 @ 13:47</div>
<div class="abs" style="left:349px;top:298px;width:34px;height:15px;background:#e6e6e6;border-right:1px solid #a6a6a6;border-bottom:1px solid #a6a6a6"></div>
<div class="cell" style="left:383px;top:298px;width:105px;height:15px;background:#ffffe1;padding:0 2px 0 2px;letter-spacing:-0.23px;">07-28-2020 @ 21:25</div>
<div class="cell" style="left:488px;top:298px;width:47px;height:15px;background:#ffffe1;padding:0 2px 0 2px;">Deleted</div>
<div class="cell" style="left:535px;top:298px;width:44px;height:15px;background:#ffffe1;padding:0 2px 0 2px;">[Admin]</div>
<div class="cell" style="left:579px;top:298px;width:165px;height:15px;background:#fff;padding:0 2px 0 2px;letter-spacing:-0.13px;">Pizano, Goggles [1282]</div>
<div class="cell" style="left:744px;top:298px;width:81px;height:15px;background:#fff;padding:0 2px 0 2px;letter-spacing:-0.20px;">03-16-2008</div>
<div class="cell" style="left:825px;top:298px;width:81px;height:15px;background:#fff;padding:0 2px 0 2px;letter-spacing:-0.20px;">03-22-2008</div>
<div class="cell r" style="left:906px;top:298px;width:46px;height:15px;background:#fff;padding:0 2px 0 2px;letter-spacing:-0.23px;padding-right:3px;">24:00</div>
<div class="cell" style="left:952px;top:298px;width:199px;height:15px;background:#fff;padding:0 2px 0 2px;letter-spacing:0.16px;">Vacation - Vacation</div>
<div class="cell r" style="left:1151px;top:298px;width:62px;height:15px;background:#fff;padding:0 2px 0 2px;letter-spacing:-0.35px;padding-right:3px;">876490</div>
<div class="cell r" style="left:1213px;top:298px;width:59px;height:15px;background:#fff;padding:0 2px 0 2px;letter-spacing:-0.42px;padding-right:3px;">864</div>
<div class="cell r" style="left:1272px;top:298px;width:46px;height:15px;background:#fff;padding:0 2px 0 2px;letter-spacing:-0.13px;padding-right:3px;">2008</div>
<div class="cell" style="left:1318px;top:298px;width:109px;height:15px;background:#fff;padding:0 2px 0 2px;letter-spacing:-0.12px;">Weekly-CentBus</div>
<div class="cell" style="left:1427px;top:298px;width:210px;height:15px;background:#fff;padding:0 2px 0 2px;letter-spacing:-0.01px;">Added by Admin on 07-23-2020 @ 13:47</div>
<div class="abs" style="left:349px;top:313px;width:34px;height:15px;background:#e6e6e6;border-right:1px solid #a6a6a6;border-bottom:1px solid #a6a6a6"></div>
<div class="cell" style="left:383px;top:313px;width:105px;height:15px;background:#ffffe1;padding:0 2px 0 2px;letter-spacing:-0.23px;border-top:1px solid #111;">07-23-2020 @ 13:47</div>
<div class="cell" style="left:488px;top:313px;width:47px;height:15px;background:#ffffe1;padding:0 2px 0 2px;border-top:1px solid #111;">Inserted</div>
<div class="cell" style="left:535px;top:313px;width:44px;height:15px;background:#ffffe1;padding:0 2px 0 2px;border-top:1px solid #111;">[Admin]</div>
<div class="cell" style="left:579px;top:313px;width:165px;height:15px;background:#ffe4b5;padding:0 2px 0 2px;letter-spacing:-0.13px;border-top:1px solid #111;">Pizano, Goggles [1282]</div>
<div class="cell" style="left:744px;top:313px;width:81px;height:15px;background:#ffe4b5;padding:0 2px 0 2px;letter-spacing:-0.20px;border-top:1px solid #111;">03-23-2008</div>
<div class="cell" style="left:825px;top:313px;width:81px;height:15px;background:#ffe4b5;padding:0 2px 0 2px;letter-spacing:-0.20px;border-top:1px solid #111;">03-29-2008</div>
<div class="cell r" style="left:906px;top:313px;width:46px;height:15px;background:#ffe4b5;padding:0 2px 0 2px;letter-spacing:-0.23px;border-top:1px solid #111;padding-right:3px;">24:00</div>
<div class="cell" style="left:952px;top:313px;width:199px;height:15px;background:#ffe4b5;padding:0 2px 0 2px;letter-spacing:0.16px;border-top:1px solid #111;">Vacation - Vacation</div>
<div class="cell r" style="left:1151px;top:313px;width:62px;height:15px;background:#ffe4b5;padding:0 2px 0 2px;letter-spacing:-0.35px;border-top:1px solid #111;padding-right:3px;">876489</div>
<div class="cell r" style="left:1213px;top:313px;width:59px;height:15px;background:#ffe4b5;padding:0 2px 0 2px;letter-spacing:-0.42px;border-top:1px solid #111;padding-right:3px;">864</div>
<div class="cell r" style="left:1272px;top:313px;width:46px;height:15px;background:#ffe4b5;padding:0 2px 0 2px;letter-spacing:-0.13px;border-top:1px solid #111;padding-right:3px;">2008</div>
<div class="cell" style="left:1318px;top:313px;width:109px;height:15px;background:#ffe4b5;padding:0 2px 0 2px;letter-spacing:-0.12px;border-top:1px solid #111;">Weekly-CentBus</div>
<div class="cell" style="left:1427px;top:313px;width:210px;height:15px;background:#ffe4b5;padding:0 2px 0 2px;letter-spacing:-0.01px;border-top:1px solid #111;">Added by Admin on 07-23-2020 @ 13:47</div>
<div class="abs" style="left:349px;top:328px;width:34px;height:15px;background:#e6e6e6;border-right:1px solid #a6a6a6;border-bottom:1px solid #a6a6a6"></div>
<div class="cell" style="left:383px;top:328px;width:105px;height:15px;background:#ffffe1;padding:0 2px 0 2px;letter-spacing:-0.23px;">07-28-2020 @ 21:25</div>
<div class="cell" style="left:488px;top:328px;width:47px;height:15px;background:#ffffe1;padding:0 2px 0 2px;">Deleted</div>
<div class="cell" style="left:535px;top:328px;width:44px;height:15px;background:#ffffe1;padding:0 2px 0 2px;">[Admin]</div>
<div class="cell" style="left:579px;top:328px;width:165px;height:15px;background:#fff;padding:0 2px 0 2px;letter-spacing:-0.13px;">Pizano, Goggles [1282]</div>
<div class="cell" style="left:744px;top:328px;width:81px;height:15px;background:#fff;padding:0 2px 0 2px;letter-spacing:-0.20px;">03-23-2008</div>
<div class="cell" style="left:825px;top:328px;width:81px;height:15px;background:#fff;padding:0 2px 0 2px;letter-spacing:-0.20px;">03-29-2008</div>
<div class="cell r" style="left:906px;top:328px;width:46px;height:15px;background:#fff;padding:0 2px 0 2px;letter-spacing:-0.23px;padding-right:3px;">24:00</div>
<div class="cell" style="left:952px;top:328px;width:199px;height:15px;background:#fff;padding:0 2px 0 2px;letter-spacing:0.16px;">Vacation - Vacation</div>
<div class="cell r" style="left:1151px;top:328px;width:62px;height:15px;background:#fff;padding:0 2px 0 2px;letter-spacing:-0.35px;padding-right:3px;">876489</div>
<div class="cell r" style="left:1213px;top:328px;width:59px;height:15px;background:#fff;padding:0 2px 0 2px;letter-spacing:-0.42px;padding-right:3px;">864</div>
<div class="cell r" style="left:1272px;top:328px;width:46px;height:15px;background:#fff;padding:0 2px 0 2px;letter-spacing:-0.13px;padding-right:3px;">2008</div>
<div class="cell" style="left:1318px;top:328px;width:109px;height:15px;background:#fff;padding:0 2px 0 2px;letter-spacing:-0.12px;">Weekly-CentBus</div>
<div class="cell" style="left:1427px;top:328px;width:210px;height:15px;background:#fff;padding:0 2px 0 2px;letter-spacing:-0.01px;">Added by Admin on 07-23-2020 @ 13:47</div>
<svg class="abs" style="left:358px;top:253px" width="14" height="14"><path d="M3.5 1.5 L10 7 L3.5 12.5 Z" fill="#000"/></svg>
<div class="abs" style="left:349px;top:504px;width:1287px;height:17px;background:#e2e2e2"></div>
<div class="abs" style="left:348px;top:504px;width:17px;height:17px;background:#fff;border:1px solid #c2c2c2"></div>
<svg class="abs" style="left:348px;top:504px" width="17" height="17"><path d="M11 4 L6 8.5 L11 13 Z" fill="#6a6a6a"/></svg>
<div class="abs" style="left:364px;top:504px;width:1231px;height:17px;background:#fff;border:1px solid #c2c2c2"></div>
<div class="abs" style="left:1619px;top:504px;width:17px;height:17px;background:#fff;border:1px solid #c2c2c2"></div>
<svg class="abs" style="left:1619px;top:504px" width="17" height="17"><path d="M6 4 L11 8.5 L6 13 Z" fill="#6a6a6a"/></svg>
<div class="abs" style="left:577px;top:203px;width:167px;height:142px;border:3px solid #a10f17"></div>
</body></html>
